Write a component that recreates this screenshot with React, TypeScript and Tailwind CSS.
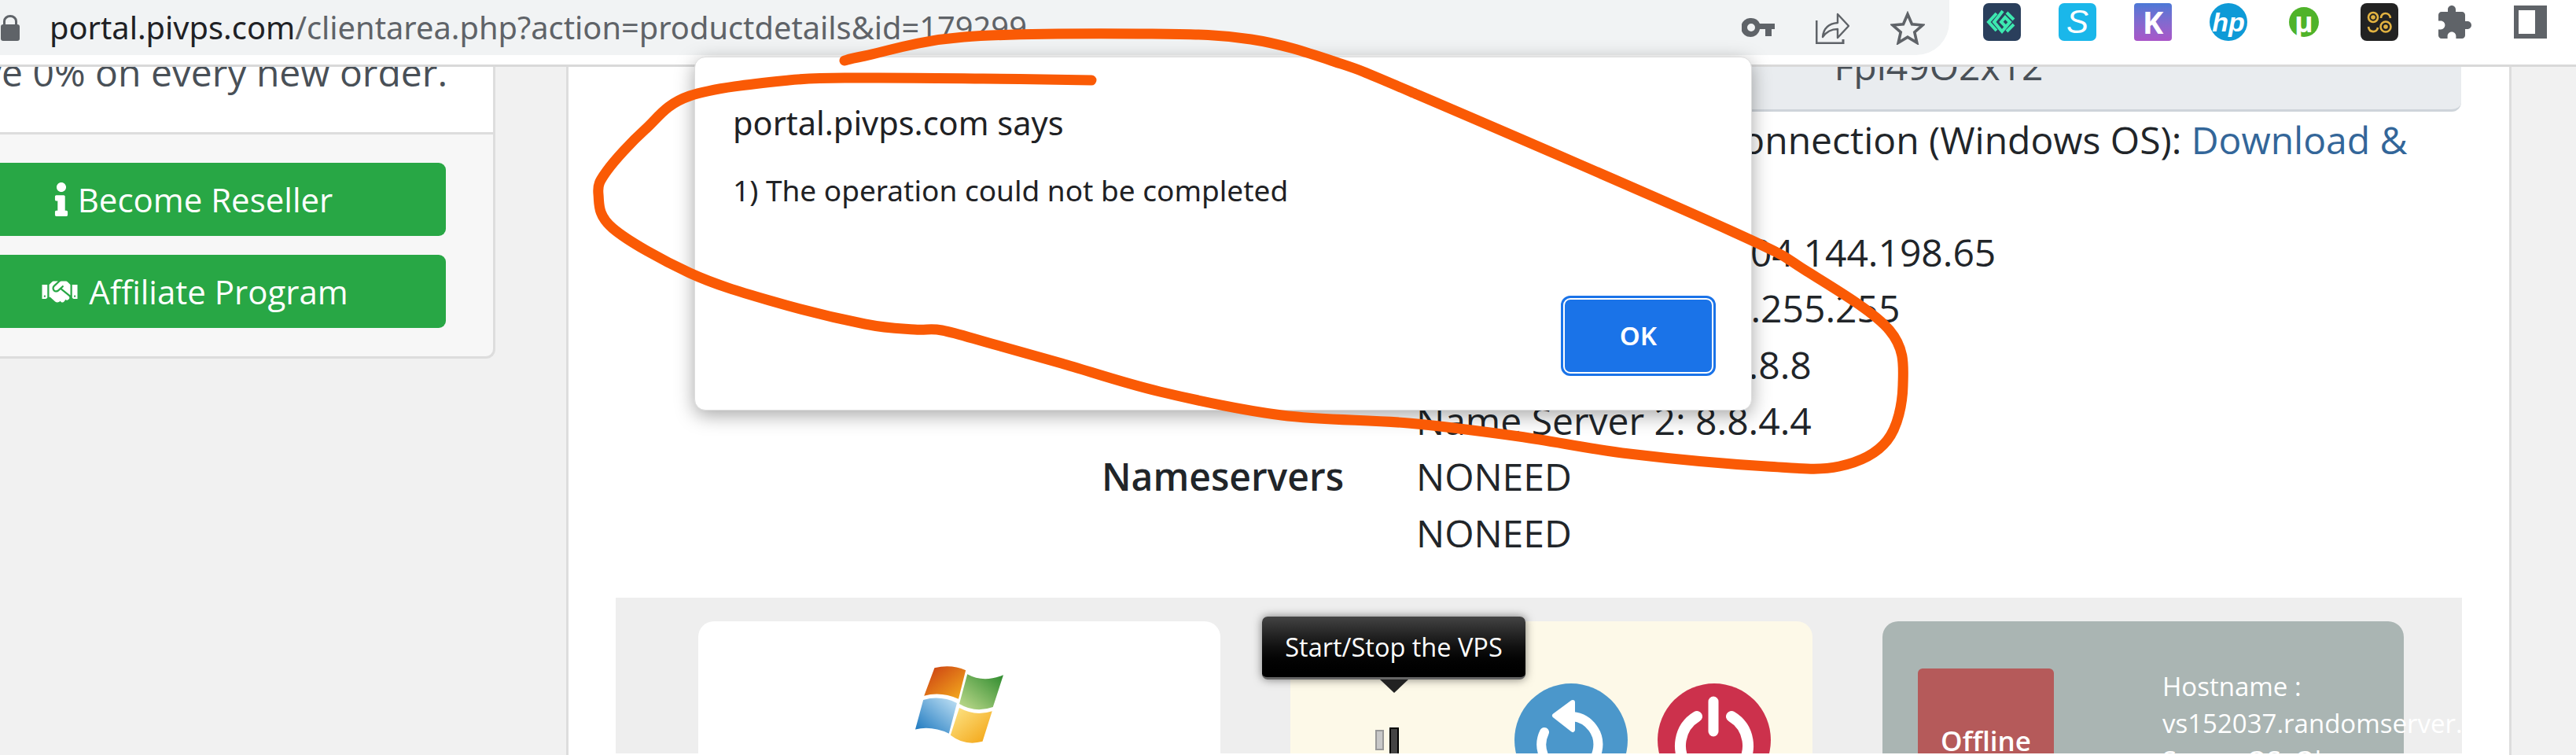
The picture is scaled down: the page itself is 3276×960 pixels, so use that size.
import React from 'react';
import { FaInfo, FaHandshake } from 'react-icons/fa';

// hand-drawn annotation, points traced from the screenshot
const stroke: [number, number][] = [
  [1388, 102], [1250, 100], [1100, 99], [1003, 102], [877, 122], [820, 165], [772, 217], [761, 247], [779, 290],
  [877, 347], [982, 383], [1100, 412], [1163, 419], [1198, 420], [1261, 437], [1350, 462], [1475, 498], [1630, 528],
  [1791, 538], [1932, 555], [2072, 577], [2247, 593], [2339, 593], [2400, 560], [2420, 490], [2403, 420], [2298, 345],
  [2200, 293], [1802, 120], [1696, 78], [1591, 50], [1465, 43], [1226, 47], [1100, 71], [1074, 77],
];

function smooth(pts: [number, number][]) {
  let d = `M${pts[0][0]} ${pts[0][1]}`;
  for (let i = 0; i < pts.length - 1; i++) {
    const p0 = pts[Math.max(i - 1, 0)];
    const p1 = pts[i];
    const p2 = pts[i + 1];
    const p3 = pts[Math.min(i + 2, pts.length - 1)];
    d += ` C${p1[0] + (p2[0] - p0[0]) / 6} ${p1[1] + (p2[1] - p0[1]) / 6} ${p2[0] - (p3[0] - p1[0]) / 6} ${p2[1] - (p3[1] - p1[1]) / 6} ${p2[0]} ${p2[1]}`;
  }
  return d;
}

const Toolbar: React.FC = () => (
  <header className="relative z-10 flex h-[85px] flex-none items-start border-b-[3px] border-[#d9d9d9] bg-white">
    <div className="flex h-[70px] w-[2479px] flex-none items-center rounded-br-[42px] bg-[#f1f3f4] pr-[31px]">
      <svg viewBox="0 0 24 33" className="ml-px h-[33px] w-[24px] flex-none fill-[#5f6368]">
        <path d="M3 12V8a9 8 0 0 1 18 0v4h-3V8a6 5 0 0 0-12 0v4z" />
        <rect x="0" y="12" width="24" height="21" rx="3" />
      </svg>
      <div className="ml-[38px] flex-1 whitespace-nowrap font-['Noto_Sans',sans-serif] text-[39.800px] leading-[70px] text-[#5f6368]">
        <span className="text-[#202124]">portal.pivps.com</span>/clientarea.php?action=productdetails&amp;id=179299
      </div>
      <div className="flex items-center gap-[52px]">
        <svg viewBox="0 0 42 24" className="h-[24px] w-[42px] fill-[#5f6368]">
          <path fillRule="evenodd" d="M12 0a12 12 0 0 1 11 7h19v7h-4v9h-8v-9h-7a12 12 0 1 1-11-14zm0 7a5 5 0 1 0 0 10 5 5 0 0 0 0-10z" />
        </svg>
        <svg viewBox="0 0 43 41" className="h-[41px] w-[43px] fill-none stroke-[#5f6368] stroke-[2.4]">
          <path d="M1 11v29h34v-5" strokeWidth="3" />
          <path d="M9 32c1-11 8-17 19-18V3l14 15-14 15V22c-8 0-14 3-19 10z" strokeLinejoin="round" />
        </svg>
        <svg viewBox="0 0 44 43" className="h-[43px] w-[44px] fill-none stroke-[#5f6368] stroke-[3.6]">
          <path d="M22 4l5.500 12.800 13.500 1.200-10.200 9 3 13.300L22 33.200 10.200 40.300l3-13.300L3 18l13.500-1.200z" />
        </svg>
      </div>
    </div>
    <div className="flex h-[70px] items-center gap-[48px] pl-[43px] pb-[14px]">
      <div className="flex h-[48px] w-[48px] items-center justify-center rounded-[7px] bg-[#2a3f5c]">
        <svg viewBox="0 0 48 48" className="h-[48px] w-[48px] fill-none stroke-[#3de8b0] stroke-[4]">
          <path d="M17 13L7 24l10 11M25 10L14 24l10 12 10-12-6-6-5 6 5 5" />
          <path d="M30 12l9 9M30 36l9-9" />
        </svg>
      </div>
      <div className="flex h-[48px] w-[48px] items-center justify-center rounded-[7px] bg-[#1ab7ea] font-['Liberation_Sans',sans-serif] text-[42px] italic leading-none text-white">
        S
      </div>
      <div className="flex h-[48px] w-[48px] items-center justify-center rounded-[4px] bg-gradient-to-b from-[#4a78d6] to-[#a955c8] font-['Open_Sans',sans-serif] text-[40px] font-bold leading-none text-white">
        K
      </div>
      <div className="flex h-[48px] w-[48px] items-center justify-center rounded-full bg-[#0e9ad7] font-['Liberation_Sans',sans-serif] text-[34px] font-bold italic leading-none text-white">
        hp
      </div>
      <div className="flex h-[48px] w-[48px] items-center justify-center">
        <div className="flex h-[38px] w-[38px] items-center justify-center rounded-full bg-[#4fb32a] font-['Open_Sans',sans-serif] text-[36px] font-bold leading-none text-white">
          µ
        </div>
      </div>
      <div className="flex h-[48px] w-[48px] items-center justify-center rounded-[8px] bg-[#222222]">
        <svg viewBox="0 0 48 48" className="h-[48px] w-[48px] fill-none stroke-[#e3b341] stroke-[2.6]">
          <circle cx="16" cy="18" r="6" />
          <circle cx="16" cy="18" r="1.500" />
          <circle cx="32" cy="30" r="6.500" />
          <circle cx="32" cy="30" r="1.500" />
          <path d="M10 30c1 8 11 8 12 1M26 19c0-8 11-8 12 0" />
        </svg>
      </div>
      <svg viewBox="1.500 1 22 21" className="h-[42px] w-[48px] fill-[#5f6368]">
        <path d="M20.500 11H19V7c0-1.100-.9-2-2-2h-4V3.500C13 2.120 11.880 1 10.500 1S8 2.120 8 3.500V5H4c-1.100 0-1.990.9-1.990 2v3.800H3.500c1.490 0 2.700 1.210 2.700 2.700s-1.210 2.700-2.700 2.700H2V20c0 1.100.9 2 2 2h3.800v-1.500c0-1.490 1.210-2.700 2.700-2.700 1.490 0 2.700 1.210 2.700 2.700V22H17c1.100 0 2-.9 2-2v-4h1.500c1.380 0 2.500-1.120 2.500-2.500S21.880 11 20.500 11z" />
      </svg>
      <div className="ml-[3px] h-[42px] w-[42px] border-y-[6px] border-l-[6px] border-r-[15px] border-[#5f6368] bg-white" />
    </div>
  </header>
);

const Sidebar: React.FC = () => (
  <aside className="-mt-[60px] h-[431px] w-[630px] flex-none overflow-hidden rounded-br-[12px] border-r-[3px] border-b-[3px] border-[#dddddd] bg-[#f7f7f7]">
    <div className="flex h-[146px] items-end justify-end whitespace-nowrap border-b-[3px] border-[#dddddd] bg-white pb-[41px] pr-[58px] text-[48px] leading-[71.400px] text-[#495057]">
      <span className="flex-none">Save 0% on every new order.</span>
    </div>
    <div className="-ml-[75px] flex w-[642px] flex-col gap-[24px] pt-[36px] text-[42px] text-white">
      <a className="flex h-[93px] items-center justify-center gap-[12px] rounded-[9px] bg-[#28a745]">
        <FaInfo className="h-[43px] w-[18px]" />
        <span>Become Reseller</span>
      </a>
      <a className="flex h-[93px] items-center justify-center gap-[10px] rounded-[9px] bg-[#28a745]">
        <FaHandshake className="h-[36px] w-[54px]" />
        <span>Affiliate Program</span>
      </a>
    </div>
  </aside>
);

const WindowsLogo: React.FC = () => (
  <svg viewBox="0 0 110 98" className="mx-auto h-[100px] w-[112px]">
    <defs>
      <linearGradient id="wr" x1="0" y1="0" x2="1" y2="1"><stop offset="0" stopColor="#c93a12" /><stop offset="1" stopColor="#f6b01e" /></linearGradient>
      <linearGradient id="wg" x1="1" y1="0" x2="0" y2="1"><stop offset="0" stopColor="#2d8a2d" /><stop offset="1" stopColor="#c2dc8f" /></linearGradient>
      <linearGradient id="wb" x1="0" y1="1" x2="1" y2="0"><stop offset="0" stopColor="#1674bd" /><stop offset="1" stopColor="#c2e2f5" /></linearGradient>
      <linearGradient id="wy" x1="1" y1="1" x2="0" y2="0"><stop offset="0" stopColor="#f3a20f" /><stop offset="1" stopColor="#fde68a" /></linearGradient>
    </defs>
    <path d="M24 3Q45-2 63 6L54 42Q32 32 11 38z" fill="url(#wr)" />
    <path d="M65 11Q85 22 110 12L97 52Q75 60 55 48z" fill="url(#wg)" />
    <path d="M10 43Q32 37 52 47L42 85Q20 75 0 80z" fill="url(#wb)" />
    <path d="M55 53Q75 64 96 57L84 95Q62 101 44 87z" fill="url(#wy)" />
  </svg>
);

const ActionCircle: React.FC<{ color: string; children: React.ReactNode }> = ({ color, children }) => (
  <svg viewBox="0 0 144 144" className={`h-[144px] w-[144px] flex-none ${color}`}>
    <circle cx="72" cy="72" r="72" />
    {children}
  </svg>
);

const VpsPanel: React.FC = () => (
  <section className="relative flex h-[198px] gap-[89px] overflow-hidden bg-[#eeeeee] pl-[105px] pt-[30px]">
    <div className="h-[300px] w-[664px] flex-none rounded-[20px] bg-white pt-[56px]">
      <WindowsLogo />
    </div>
    <div className="flex h-[300px] w-[664px] flex-none items-start rounded-[20px] bg-[#fdf9e8] pl-[108px] pt-[79px]">
      <div className="mt-[56px] flex flex-none items-start gap-[7px]">
        <div className="mt-[3px] h-[26px] w-[11px] border-2 border-[#999999] bg-[#c8c8c8]" />
        <div className="h-[60px] w-[12px] border-2 border-black bg-[#444444]" />
      </div>
      <div className="ml-[147px] flex gap-[38px]">
        <ActionCircle color="fill-[#4b97cb]">
          <path d="M38 62A36 36 0 1 0 74 42" className="fill-none stroke-white stroke-[12]" strokeLinecap="round" />
          <path d="M74 24L51 41 74 59z" className="fill-white stroke-white stroke-[6]" strokeLinejoin="round" />
        </ActionCircle>
        <ActionCircle color="fill-[#cc314c]">
          <path d="M50 42A43 43 0 1 0 94 42" className="fill-none stroke-white stroke-[14]" strokeLinecap="round" />
          <path d="M71 23v38" className="fill-none stroke-white stroke-[13]" strokeLinecap="round" />
        </ActionCircle>
      </div>
    </div>
    <div className="flex h-[300px] w-[663px] flex-none rounded-[20px] bg-[#aab5b3] pl-[45px] pt-[60px] text-white">
      <div className="flex h-[200px] w-[173px] flex-none justify-center rounded-[6px] bg-[#b55a5a] pt-[67px] text-[35px] font-semibold leading-[50px]">
        Offline
      </div>
      <div className="ml-[138px] -mt-px flex-none whitespace-nowrap text-[33px] leading-[47px]">
        <div>Hostname :</div>
        <div>vs152037.randomserver.com</div>
        <div>Server OS: Ok</div>
      </div>
    </div>
    <div className="absolute left-[822px] top-[24px] flex h-[80px] w-[335px] items-center justify-center rounded-[7px] border-b-[3px] border-[#666666] bg-gradient-to-b from-[#444444] via-[#111111] to-black text-[32.500px] text-white shadow-[0_0_12px_rgba(0,0,0,0.5)]">
      Start/Stop the VPS
    </div>
    <div className="absolute left-[972px] top-[104px] h-0 w-0 border-x-[18px] border-t-[17px] border-x-transparent border-t-[#222222]" />
  </section>
);

const DetailsPanel: React.FC = () => (
  <main className="-mt-[60px] ml-[90px] w-[2474px] flex-none self-stretch border-x-[3px] border-[#dddddd] bg-white text-[48px] leading-[71.400px] text-[#212529]">
    <div className="px-[60px]">
      <div className="ml-[1018px]">
        <div className="flex h-[117px] w-[1329px] items-end justify-center rounded-br-[12px] border-b-[3px] border-[#ced4da] bg-[#e9ecef] pb-[20px] text-[#495057]">
          Fpl49O2x12
        </div>
        <p>
          Remote Desktop Connection (Windows OS): <a className="text-[#336699]">Download &amp; Install</a>
        </p>
        <p>Main IP Address : 104.144.198.65</p>
        <p>Net Mask : 255.255.255.255</p>
        <p>Name Server 1: 8.8.8.8</p>
        <p>Name Server 2: 8.8.4.4</p>
      </div>
      <div className="flex">
        <div className="w-[1018px] flex-none pr-[92px] text-right font-semibold">Nameservers</div>
        <div>
          <p>NONEED</p>
          <p>NONEED</p>
        </div>
      </div>
    </div>
    <div className="mt-[47px] px-[60px]">
      <VpsPanel />
    </div>
  </main>
);

export default function App() {
  return (
    <div className="relative flex h-[960px] w-[3276px] flex-col overflow-hidden bg-[#f1f1f1] font-['Open_Sans',sans-serif]">
      <Toolbar />
      <div className="flex flex-1 items-start overflow-hidden">
        <Sidebar />
        <DetailsPanel />
      </div>

      {/* alert() dialog */}
      <div className="absolute left-[883px] top-[72px] z-20 h-[450px] w-[1345px] rounded-[14px] border border-[#dddddd] bg-white pl-[48px] pt-[55px] font-['Noto_Sans',sans-serif] text-[#202124] shadow-[0_6px_24px_rgba(0,0,0,0.35)]">
        <div className="text-[41.500px] leading-[56px]">portal.pivps.com says</div>
        <div className="mt-[30px] text-[37px] leading-[56px]">1) The operation could not be completed</div>
        <button className="absolute left-[1101px] top-[303px] flex h-[102px] w-[197px] items-center justify-center rounded-[12px] border-[6px] border-[#1a73e8] bg-[#1a73e8] text-[33px] font-semibold text-white outline outline-2 -outline-offset-[5px] outline-white">
          OK
        </button>
      </div>

      <svg viewBox="0 0 3276 960" className="pointer-events-none absolute inset-0 z-30 h-[960px] w-[3276px]">
        <path d={smooth(stroke)} className="fill-none stroke-[#fa5a05] stroke-[13]" strokeLinecap="round" strokeLinejoin="round" />
      </svg>
    </div>
  );
}
